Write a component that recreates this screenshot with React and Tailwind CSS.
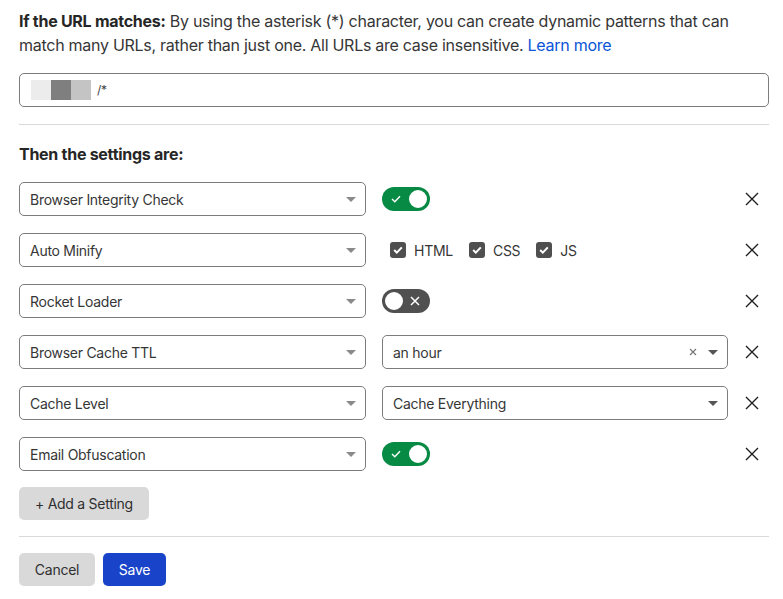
import { useState } from "react";

const Caret = ({ dark }) => (
	<svg width="10" height="5" viewBox="0 0 10 5" className="shrink-0">
		<path d="M0 0h10L5 5z" fill={dark ? "#555555" : "#8a8a8a"} />
	</svg>
);

const CloseIcon = () => (
	<svg width="14" height="14" viewBox="0 0 14 14">
		<path d="M1 1l12 12M13 1L1 13" stroke="#1f1f1f" strokeWidth="1.4" />
	</svg>
);

const Select = ({ value, clearable, dark }) => (
	<div className="flex h-[34px] w-full items-center justify-between rounded-[5px] border border-[#7c7c7c] bg-white pl-[10px] pr-[9px]">
		<span className="pt-px text-[14px] text-[#363636]">{value}</span>
		<div className="flex items-center gap-[11px]">
			{clearable && (
				<svg width="8" height="8" viewBox="0 0 8 8">
					<path d="M1 1l6 6M7 1L1 7" stroke="#777777" strokeWidth="1.2" />
				</svg>
			)}
			<Caret dark={dark} />
		</div>
	</div>
);

const Toggle = ({ on }) =>
	on ? (
		<div className="flex h-[24px] w-[48px] items-center justify-between rounded-full bg-[#078a44] pl-[9px] pr-[1px]">
			<svg width="10" height="8" viewBox="0 0 10 8">
				<path d="M1 4l2.8 2.8L9 1.2" stroke="#ffffff" strokeWidth="1.4" fill="none" />
			</svg>
			<span className="h-[22px] w-[22px] rounded-full border-2 border-[#078a44] bg-white" />
		</div>
	) : (
		<div className="flex h-[24px] w-[48px] items-center justify-between rounded-full bg-[#505050] pl-[1px] pr-[10px]">
			<span className="h-[22px] w-[22px] rounded-full border-2 border-[#505050] bg-white" />
			<svg width="10" height="10" viewBox="0 0 10 10">
				<path d="M1 1l8 8M9 1L1 9" stroke="#ffffff" strokeWidth="1.5" />
			</svg>
		</div>
	);

const Check = ({ label }) => (
	<label className="flex items-center gap-[8px] text-[14px] text-[#363636]">
		<span className="flex h-[16px] w-[16px] items-center justify-center rounded-[3px] bg-[#4f4f4f]">
			<svg width="10" height="8" viewBox="0 0 10 8">
				<path d="M1.2 4l2.6 2.6L8.8 1.4" stroke="#ffffff" strokeWidth="2" fill="none" />
			</svg>
		</span>
		{label}
	</label>
);

const rows = [
	{ name: "Browser Integrity Check", control: <Toggle on /> },
	{
		name: "Auto Minify",
		control: (
			<div className="flex items-center gap-[16px] pl-[8px]">
				<Check label="HTML" />
				<Check label="CSS" />
				<Check label="JS" />
			</div>
		),
	},
	{ name: "Rocket Loader", control: <Toggle /> },
	{ name: "Browser Cache TTL", control: <Select value="an hour" clearable dark /> },
	{ name: "Cache Level", control: <Select value="Cache Everything" dark /> },
	{ name: "Email Obfuscation", control: <Toggle on /> },
];

const App = () => {
	const [url] = useState("/*");

	return (
		<div className="min-h-screen bg-white pl-[19px] pt-[9px] font-['Inter','Liberation_Sans',sans-serif] tracking-[-0.017em] text-[#363636]">
			<div className="w-[750px]">
				<p className="text-[16px] leading-[24px]">
					<strong className="font-bold text-[#262626]">If the URL matches:</strong> By using the asterisk (*)
					character, you can create dynamic patterns that can match many URLs, rather than just one. All URLs
					are case insensitive. <a className="text-[#0b55d6]">Learn more</a>
				</p>

				<div className="mt-[16px] flex h-[34px] items-center rounded-[5px] border border-[#7c7c7c] pl-[11px]">
					<span className="h-[20px] w-[20px] bg-[#ececec]" />
					<span className="h-[20px] w-[20px] bg-[#7f7f7f]" />
					<span className="h-[20px] w-[20px] bg-[#c4c4c4]" />
					<span className="ml-[6px] text-[12px] text-[#444]">{url}</span>
				</div>

				<div className="mt-[17px] h-px bg-[#d9d9d9]" />

				<h2 className="mt-[17px] text-[16px] font-bold leading-[24px] text-[#262626]">Then the settings are:</h2>

				<div className="mt-[16px] flex flex-col gap-[17px]">
					{rows.map((row) => (
						<div key={row.name} className="grid grid-cols-[347px_346px_1fr] items-center gap-x-[16px]">
							<Select value={row.name} />
							<div className="flex items-center">{row.control}</div>
							<button className="flex justify-end pr-[10px]">
								<CloseIcon />
							</button>
						</div>
					))}
				</div>

				<button className="mt-[16px] h-[33px] rounded-[5px] bg-[#d9d9d9] px-[16px] text-[14px] text-[#2f2f2f]">
					+ Add a Setting
				</button>

				<div className="mt-[16px] h-px bg-[#d9d9d9]" />

				<div className="mt-[16px] flex gap-[8px]">
					<button className="h-[33px] w-[76px] rounded-[5px] bg-[#d9d9d9] text-[14px] text-[#2f2f2f]">Cancel</button>
					<button className="h-[33px] w-[63px] rounded-[5px] bg-[#1944c9] text-[14px] text-white">Save</button>
				</div>
			</div>
		</div>
	);
};

export default App;
